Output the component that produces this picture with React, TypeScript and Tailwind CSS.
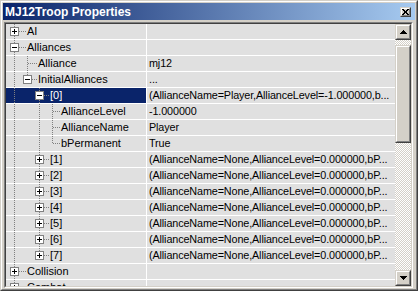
import React from 'react'

type Row = {
  name: string
  value: string
  level: number
  kind: 'plus' | 'minus' | 'leaf'
  next: boolean
  selected?: boolean
}

const noneValue = '(AllianceName=None,AllianceLevel=0.000000,bP...'

const rows: Row[] = [
  { name: 'AI', value: '', level: 0, kind: 'plus', next: true },
  { name: 'Alliances', value: '', level: 0, kind: 'minus', next: true },
  { name: 'Alliance', value: 'mj12', level: 1, kind: 'leaf', next: true },
  { name: 'InitialAlliances', value: '...', level: 1, kind: 'minus', next: false },
  { name: '[0]', value: '(AllianceName=Player,AllianceLevel=-1.000000,b...', level: 2, kind: 'minus', next: true, selected: true },
  { name: 'AllianceLevel', value: '-1.000000', level: 3, kind: 'leaf', next: true },
  { name: 'AllianceName', value: 'Player', level: 3, kind: 'leaf', next: true },
  { name: 'bPermanent', value: 'True', level: 3, kind: 'leaf', next: false },
  ...[1, 2, 3, 4, 5, 6, 7].map((i) => ({
    name: `[${i}]`,
    value: noneValue,
    level: 2,
    kind: 'plus' as const,
    next: i < 7,
  })),
  { name: 'Collision', value: '', level: 0, kind: 'plus', next: true },
  { name: 'Combat', value: '', level: 0, kind: 'plus', next: true },
]

// pixel columns of the tree (relative to the name cell)
const cx = [8, 21, 33, 46]
const textX = [22, 33, 45, 56]

// which levels keep a vertical line running through each row
const withLines = (() => {
  const open: boolean[] = []
  return rows.map((r) => {
    open[r.level] = r.next
    open.length = r.level + 1
    return { ...r, ancestors: open.slice(0, r.level) }
  })
})()

function TreeGutter({ row }: { row: Row & { ancestors: boolean[] } }) {
  const l = row.level
  const x = cx[l] + 0.5
  const dot = { stroke: '#808080', strokeWidth: 1, strokeDasharray: '1 1' }
  return (
    <svg width={textX[l] - 1} height={15} shapeRendering="crispEdges" className="shrink-0">
      {row.ancestors.map((on, a) =>
        on ? <line key={a} x1={cx[a] + 0.5} y1={0} x2={cx[a] + 0.5} y2={15} {...dot} /> : null
      )}
      <line x1={x} y1={0} x2={x} y2={row.next ? 15 : 8} {...dot} />
      <line x1={cx[l] + 1} y1={7.5} x2={textX[l] - 2} y2={7.5} {...dot} />
      {row.kind !== 'leaf' && (
        <g>
          <rect x={cx[l] - 3.5} y={3.5} width={8} height={8} fill="#ffffff" stroke="#808080" />
          <line x1={cx[l] - 2} y1={7.5} x2={cx[l] + 3} y2={7.5} stroke="#000" />
          {row.kind === 'plus' && <line x1={x} y1={5} x2={x} y2={10} stroke="#000" />}
        </g>
      )}
    </svg>
  )
}

function Raised({ className, children }: { className: string; children?: React.ReactNode }) {
  return (
    <div className={`border-t border-l border-[#d4d0c8] border-r border-b border-r-[#404040] border-b-[#404040] ${className}`}>
      <div className="flex h-full w-full items-center justify-center border-t border-l border-white border-r border-b border-r-[#808080] border-b-[#808080] bg-[#d4d0c8]">
        {children}
      </div>
    </div>
  )
}

function Track({ className }: { className: string }) {
  return (
    <div
      className={`bg-[repeating-conic-gradient(#d4d0c8_0%_25%,#ffffff_0%_50%)] bg-[length:2px_2px] ${className}`}
    />
  )
}

export default function App() {
  return (
    <div
      className="h-[291px] w-[418px] overflow-hidden border border-t-[#d4d0c8] border-l-[#d4d0c8] border-r-[#404040] border-b-[#404040] text-[11px] text-black"
      style={{ fontFamily: '"Liberation Sans", Arial, sans-serif' }}
    >
      <div className="h-full w-full border border-t-white border-l-white border-r-[#808080] border-b-[#808080] bg-[#d4d0c8] p-px">
        <div className="flex h-full flex-col">
          {/* title bar */}
          <div className="flex h-[17px] shrink-0 items-center justify-between bg-linear-to-r/srgb from-[#0a246a] to-[#a6caf0] pr-[4px] pl-[2px]">
            <span className="text-[12px] leading-none font-bold text-white">MJ12Troop Properties</span>
            <Raised className="h-[10px] w-[11px]">
              <svg width="7" height="6" shapeRendering="crispEdges">
                <path d="M0 0h2v1h-2zM5 0h2v1h-2zM1 1h2v1h-2zM4 1h2v1h-2zM2 2h3v2h-3zM1 4h2v1h-2zM4 4h2v1h-2zM0 5h2v1h-2zM5 5h2v1h-2z" fill="#000" />
              </svg>
            </Raised>
          </div>

          {/* property list */}
          <div className="mt-[2px] mr-[2px] ml-px min-h-0 flex-1 border border-t-[#808080] border-l-[#808080] border-r-white border-b-white">
            <div className="flex h-full border border-t-[#404040] border-l-[#404040] border-r-[#d4d0c8] border-b-[#d4d0c8]">
              <div className="min-h-0 flex-1 overflow-hidden">
                {withLines.map((row) => (
                  <div key={row.name} className="flex h-[16px] border-b border-white bg-[#e0e0e0]">
                    <div
                      className={`flex w-[141px] shrink-0 items-center overflow-hidden border-r border-white whitespace-nowrap ${
                        row.selected ? 'bg-[#0a246a] text-white' : ''
                      }`}
                    >
                      <TreeGutter row={row} />
                      <span className="leading-[15px]">{row.name}</span>
                    </div>
                    <div className="min-w-0 flex-1 pl-[2px] text-[10.8px] leading-[15px] tracking-[-0.12px] whitespace-nowrap">
                      {row.value}
                    </div>
                  </div>
                ))}
              </div>

              {/* scrollbar */}
              <div className="flex w-[16px] shrink-0 flex-col">
                <Raised className="h-[16px] w-[16px] shrink-0">
                  <svg width="7" height="4" shapeRendering="crispEdges">
                    <path d="M3 0h1v1h-1zM2 1h3v1h-3zM1 2h5v1h-5zM0 3h7v1h-7z" fill="#000" />
                  </svg>
                </Raised>
                <Track className="h-[5px] shrink-0" />
                <Raised className="h-[98px] w-[16px] shrink-0" />
                <Track className="flex-1" />
                <Raised className="h-[16px] w-[16px] shrink-0">
                  <svg width="7" height="4" shapeRendering="crispEdges">
                    <path d="M0 0h7v1h-7zM1 1h5v1h-5zM2 2h3v1h-3zM3 3h1v1h-1z" fill="#000" />
                  </svg>
                </Raised>
              </div>
            </div>
          </div>
        </div>
      </div>
    </div>
  )
}
